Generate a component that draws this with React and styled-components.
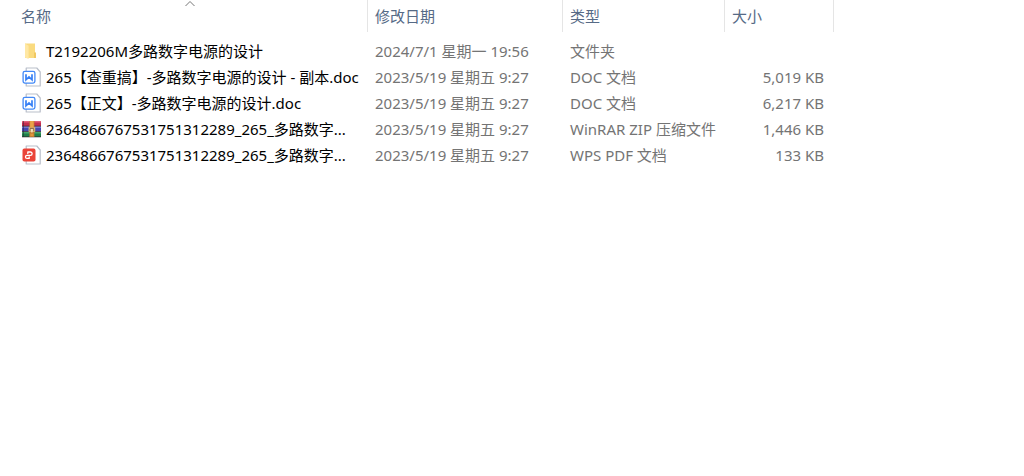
import React from "react"
import styled, { createGlobalStyle } from "styled-components"

const GlobalStyle = createGlobalStyle`
  body {
    margin: 0;
    background: #ffffff;
    font-family: "Noto Sans", "Noto Sans CJK SC", sans-serif;
    font-size: 15px;
  }
`

const FileTable = styled.table`
  width: 100%;
  table-layout: fixed;
  border-collapse: separate;
  border-spacing: 0;
`

const Column = styled.col`
  width: ${({ $width }) => ($width ? `${$width}px` : "auto")};
`

const HeaderCell = styled.th`
  position: relative;
  height: 32px;
  padding: 0;
  text-align: left;
  border-right: 1px solid #e5e5e5;
  box-sizing: border-box;
`

const HeaderButton = styled.button`
  display: block;
  width: 100%;
  height: 32px;
  padding: 0 0 0 ${({ $first }) => ($first ? "21px" : "7px")};
  border: 0;
  background: none;
  color: #566a86;
  font: inherit;
  font-weight: 400;
  line-height: 32px;
  text-align: left;
`

const SortArrow = styled.svg`
  position: absolute;
  top: 0;
  left: 50%;
  width: 12px;
  height: 7px;
`

const Row = styled.tr`
  &:first-child td {
    padding-top: 6px;
  }
`

const Cell = styled.td`
  padding: 0 10px 0 7px;
  color: #747474;
  line-height: 26px;
  text-align: ${({ $right }) => ($right ? "right" : "left")};
  white-space: nowrap;
`

const NameCell = styled(Cell)`
  padding: 0 0 0 22px;
  color: #000000;
`

const FileName = styled.div`
  display: flex;
  align-items: center;
  gap: 4px;
  height: 26px;
`

const Icon = styled.svg`
  flex: none;
  width: 20px;
  height: 20px;
`

const FolderIcon = () => (
  <Icon viewBox="0 0 20 20" aria-hidden="true">
    <path d="M3 2.5h10v9l1 1V17H3z" fill="#fadb80" />
    <path d="M12 11.5h2V17h-2z" fill="#f0c862" />
    <path d="M3 2.5l3.6 2.3V18L3 16.5z" fill="#ffe8a4" />
  </Icon>
)

const Page = () => (
  <path
    d="M4.2 1h10.6l3.4 4v14h-14z"
    fill="#ffffff"
    stroke="#b9bfca"
    strokeWidth="1.2"
    strokeLinejoin="round"
  />
)

const DocIcon = () => (
  <Icon viewBox="0 0 20 20" aria-hidden="true">
    <Page />
    <rect x="1.1" y="4.3" width="11.8" height="11.8" rx="1.8" fill="#ffffff" stroke="#4289f7" strokeWidth="1.3" />
    <path d="M4 7.2v5.6l3-2.8 3 2.8V7.2" fill="none" stroke="#367ff5" strokeWidth="1.7" />
  </Icon>
)

const PdfIcon = () => (
  <Icon viewBox="0 0 20 20" aria-hidden="true">
    <Page />
    <rect x="0.5" y="3.6" width="13" height="13" rx="1.8" fill="#ea4338" />
    <path
      d="M5.8 8.4V7h2.6a1.7 1.7 0 0 1 0 3.4H5a1.5 1.5 0 0 0 0 3h2.2V12"
      fill="none"
      stroke="#ffffff"
      strokeWidth="1.3"
      strokeLinecap="round"
      strokeLinejoin="round"
    />
  </Icon>
)

const ZipIcon = () => (
  <Icon viewBox="0 0 20 20" aria-hidden="true">
    <path d="M0 2h19v5H0z" fill="#c42e4e" />
    <path d="M0 2h19v1.5H0z" fill="#e0607a" />
    <path d="M0 7.5h19v5H0z" fill="#4448b0" />
    <path d="M0 7.5h19V9H0z" fill="#7477d0" />
    <path d="M0 13h19v5H0z" fill="#1f7f4a" />
    <path d="M0 13h19v1.5H0z" fill="#45a66a" />
    <path d="M0 6.8h19v.7H0zM0 12.3h19v.7H0zM0 17.6h19v.7H0z" fill="#32242c" />
    <path d="M1.5 2v16" stroke="#251f34" strokeOpacity=".5" />
    <path d="M7.4 2h5v16h-5z" fill="#c07a30" />
    <path d="M8.1 2h3.6v6H8.1z" fill="#eaa348" />
    <path d="M6.6 8.4h6.6v4.4H6.6z" fill="#ecc684" />
    <path d="M8 12.2V9.4h3.8v2.8" fill="none" stroke="#85664a" strokeWidth="1" />
    <path d="M9.9 10v3.4" stroke="#f6e9cf" strokeWidth="1.2" />
    <path d="M8.4 14.6h3v2.4h-3z" fill="#e0963c" />
  </Icon>
)

const icons = { folder: FolderIcon, doc: DocIcon, zip: ZipIcon, pdf: PdfIcon }

const files = [
  { icon: "folder", name: "T2192206M多路数字电源的设计", date: "2024/7/1 星期一 19:56", type: "文件夹", size: "" },
  { icon: "doc", name: "265【查重搞】-多路数字电源的设计 - 副本.doc", date: "2023/5/19 星期五 9:27", type: "DOC 文档", size: "5,019 KB" },
  { icon: "doc", name: "265【正文】-多路数字电源的设计.doc", date: "2023/5/19 星期五 9:27", type: "DOC 文档", size: "6,217 KB" },
  { icon: "zip", name: "2364866767531751312289_265_多路数字...", date: "2023/5/19 星期五 9:27", type: "WinRAR ZIP 压缩文件", size: "1,446 KB" },
  { icon: "pdf", name: "2364866767531751312289_265_多路数字...", date: "2023/5/19 星期五 9:27", type: "WPS PDF 文档", size: "133 KB" },
]

const columns = [
  { label: "名称", width: 368, sorted: true },
  { label: "修改日期", width: 195 },
  { label: "类型", width: 162 },
  { label: "大小", width: 109 },
]

const App = () => {
  return (
    <>
      <GlobalStyle />
      <FileTable>
        <colgroup>
          {columns.map(({ label, width }) => (
            <Column key={label} $width={width} />
          ))}
          <Column />
        </colgroup>
        <thead>
          <tr>
            {columns.map(({ label, sorted }) => (
              <HeaderCell key={label} scope="col" aria-sort={sorted ? "ascending" : undefined}>
                <HeaderButton type="button" $first={sorted}>{label}</HeaderButton>
                {sorted && (
                  <SortArrow viewBox="0 0 12 7" aria-hidden="true">
                    <path d="M1.5 6L6 1.5 10.5 6" fill="none" stroke="#777777" />
                  </SortArrow>
                )}
              </HeaderCell>
            ))}
          </tr>
        </thead>
        <tbody>
          {files.map(({ icon, name, date, type, size }, index) => {
            const FileIcon = icons[icon]
            return (
              <Row key={index}>
                <NameCell>
                  <FileName>
                    <FileIcon />
                    <span>{name}</span>
                  </FileName>
                </NameCell>
                <Cell>{date}</Cell>
                <Cell>{type}</Cell>
                <Cell $right>{size}</Cell>
              </Row>
            )
          })}
        </tbody>
      </FileTable>
    </>
  )
}

export default App
